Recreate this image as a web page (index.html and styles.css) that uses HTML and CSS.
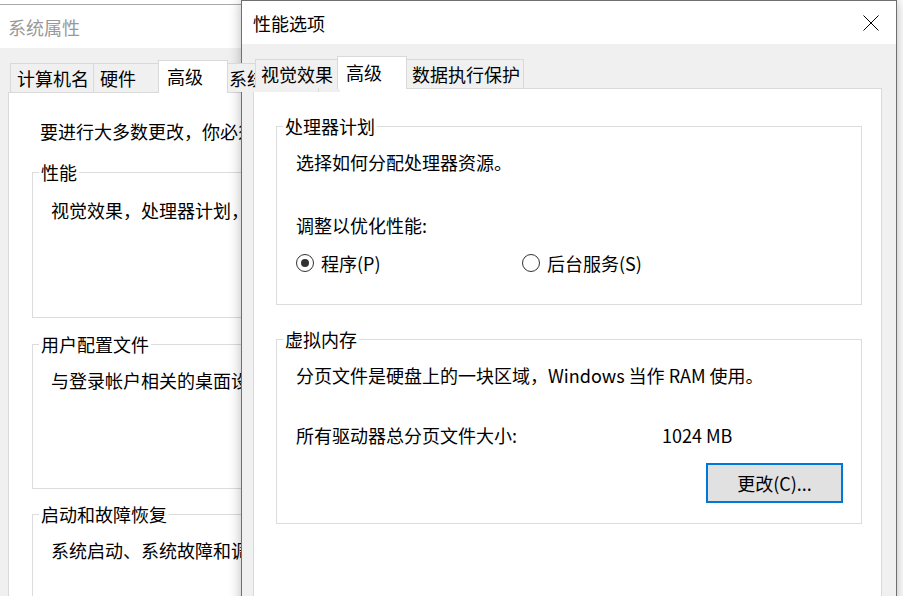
FILE: index.html
```html
<!DOCTYPE html>
<html lang="zh-CN">
<head>
<meta charset="utf-8">
<title>性能选项</title>
<link rel="stylesheet" href="styles.css">
</head>
<body>
<div class="desktop">
  <section class="win win-back">
    <header class="titlebar back-title"><span class="title inactive">系统属性</span></header>
    <div class="win-body back-body">
      <div class="tabs back-tabs">
        <div class="tab bt1">计算机名</div>
        <div class="tab bt2">硬件</div>
        <div class="tab sel bt3">高级</div>
        <div class="tab bt4">系统保护</div>
        <div class="tab bt5">远程</div>
      </div>
      <div class="panel back-panel">
        <p class="intro">要进行大多数更改，你必须作为管理员登录。</p>
        <div class="group bg1">
          <div class="glabel">性能</div>
          <p class="gtext bgt1">视觉效果，处理器计划，内存使用，以及虚拟内存</p>
        </div>
        <div class="group bg2">
          <div class="glabel">用户配置文件</div>
          <p class="gtext bgt2">与登录帐户相关的桌面设置</p>
        </div>
        <div class="group bg3">
          <div class="glabel">启动和故障恢复</div>
          <p class="gtext bgt2">系统启动、系统故障和调试信息</p>
        </div>
      </div>
    </div>
  </section>

  <section class="win win-front">
    <header class="titlebar front-title">
      <span class="title">性能选项</span>
      <svg class="close" width="16" height="16" viewBox="0 0 16 16" aria-label="关闭">
        <path d="M0.5 0.5 L15.5 15.5 M15.5 0.5 L0.5 15.5" stroke="#000" stroke-width="1" fill="none"/>
      </svg>
    </header>
    <div class="win-body front-body">
      <div class="tabs front-tabs">
        <div class="tab ft1">视觉效果</div>
        <div class="tab sel ft2">高级</div>
        <div class="tab ft3">数据执行保护</div>
      </div>
      <div class="panel front-panel">
        <div class="group fg1">
          <div class="glabel">处理器计划</div>
          <p class="line l1">选择如何分配处理器资源。</p>
          <p class="line l2">调整以优化性能:</p>
          <div class="radios">
            <label class="radio r1"><span class="circle"><span class="dot"></span></span><span>程序(P)</span></label>
            <label class="radio"><span class="circle"></span><span>后台服务(S)</span></label>
          </div>
        </div>
        <div class="group fg2">
          <div class="glabel">虚拟内存</div>
          <p class="line l1">分页文件是硬盘上的一块区域，Windows 当作 RAM 使用。</p>
          <div class="line l3 sizes"><span class="size-label">所有驱动器总分页文件大小:</span><span>1024 MB</span></div>
          <div class="btnrow"><button class="btn">更改(C)...</button></div>
        </div>
      </div>
    </div>
  </section>
</div>
</body>
</html>
```

FILE: styles.css
```css
* { box-sizing: border-box; }

html, body {
  margin: 0;
  padding: 0;
  background: #ffffff;
}

body {
  font-family: "Noto Sans CJK SC", "Noto Sans", sans-serif;
  font-size: 18px;
  line-height: 20px;
  color: #000;
  overflow: hidden;
  width: 903px;
  height: 596px;
}

p { margin: 0; }

.desktop {
  position: relative;
  width: 903px;
  height: 596px;
  overflow: hidden;
}

/* windows on the desktop */
.win {
  position: absolute;
  display: flex;
  flex-direction: column;
  background: #f0f0f0;
}

.win-back {
  left: 0;
  top: 4px;
  width: 340px;
  height: 640px;
  border-top: 1px solid #a9a9a9;
  overflow: hidden;
}

.win-front {
  left: 241px;
  top: 0;
  width: 656px;
  height: 640px;
  border: 1px solid #6f6f6f;
  box-shadow: 0 0 12px rgba(0, 0, 0, 0.28);
}

.titlebar {
  display: flex;
  align-items: center;
  background: #fff;
  flex: none;
}

.back-title {
  height: 43px;
  padding-left: 8px;
}

.front-title {
  height: 43px;
  padding-left: 11px;
  padding-right: 17px;
  justify-content: space-between;
}

.title {
  font-size: 18px;
  line-height: 22px;
}

.title.inactive { color: #999; }

.close { display: block; }

.win-body {
  flex: 1;
  display: flex;
  flex-direction: column;
}

.back-body { padding-left: 8px; }

.front-body {
  padding-left: 11px;
  padding-right: 14px;
}

/* tabs */
.tabs {
  display: flex;
  align-items: flex-end;
  height: 44px;
  flex: none;
  position: relative;
  z-index: 1;
}

.back-tabs { margin-left: 2px; }
.front-tabs { margin-left: 2px; }

.tab {
  flex: none;
  height: 29px;
  border: 1px solid #d9d9d9;
  border-bottom: none;
  background: #f0f0f0;
  padding: 0 0 0 6px;
  line-height: 28px;
  white-space: nowrap;
  margin-left: -1px;
  overflow: hidden;
}

.tab:first-child { margin-left: 0; }

.tab.sel {
  height: 33px;
  margin-bottom: -1px;
  background: #fff;
  padding-left: 8px;
  line-height: 30px;
  position: relative;
  z-index: 2;
}

.bt1 { width: 84px; }
.bt2 { width: 66px; }
.bt3 { width: 70px; }
.bt4 { width: 92px; padding-left: 1px; }
.bt5 { width: 60px; }

.ft1 { width: 83px; padding-left: 5px; }
.ft2 { width: 70px; }
.ft3 { width: 118px; padding-left: 5px; }

/* panels */
.panel {
  flex: 1;
  background: #fff;
  border: 1px solid #d9d9d9;
  display: flex;
  flex-direction: column;
}

.back-panel {
  padding-top: 28px;
  white-space: nowrap;
}

.intro { padding-left: 31px; }

/* group boxes */
.group {
  border: 1px solid #dcdcdc;
  flex: none;
}

.glabel {
  display: block;
  width: fit-content;
  margin: -11px 0 0 6px;
  padding: 0 2px;
  background: #fff;
  line-height: 20px;
  white-space: nowrap;
}

.bg1 { margin: 31px 0 0 23px; height: 146px; }
.bg2 { margin: 26px 0 0 23px; height: 145px; }
.bg3 { margin: 25px 0 0 23px; height: 160px; }

.gtext { padding-left: 18px; }
.bgt1 { margin-top: 18px; }
.bgt2 { margin-top: 16px; }

.fg1 {
  margin: 37px 19px 0 22px;
  height: 179px;
  padding-left: 19px;
}

.fg2 {
  margin: 34px 19px 0 22px;
  height: 185px;
  padding-left: 19px;
  padding-right: 18px;
}

.fg1 .glabel, .fg2 .glabel { margin-left: -13px; }

.line { white-space: nowrap; }
.l1 { margin-top: 16px; }
.l2 { margin-top: 43px; }
.l3 { margin-top: 40px; }

.radios {
  display: flex;
  margin-top: 18px;
  height: 20px;
}

.radio {
  display: flex;
  align-items: center;
  gap: 7px;
}

.r1 { width: 226px; }

.circle {
  width: 18px;
  height: 18px;
  border: 1px solid #333;
  border-radius: 50%;
  display: flex;
  align-items: center;
  justify-content: center;
  flex: none;
}

.dot {
  width: 8px;
  height: 8px;
  border-radius: 50%;
  background: #333;
}

.sizes { display: flex; }
.size-label { width: 366px; }

.btnrow {
  display: flex;
  justify-content: flex-end;
  margin-top: 18px;
}

.btn {
  width: 137px;
  height: 40px;
  border: 2px solid #0078d7;
  background: #e1e1e1;
  font-family: inherit;
  font-size: 18px;
  line-height: 20px;
  color: #000;
  padding: 0;
}
```
